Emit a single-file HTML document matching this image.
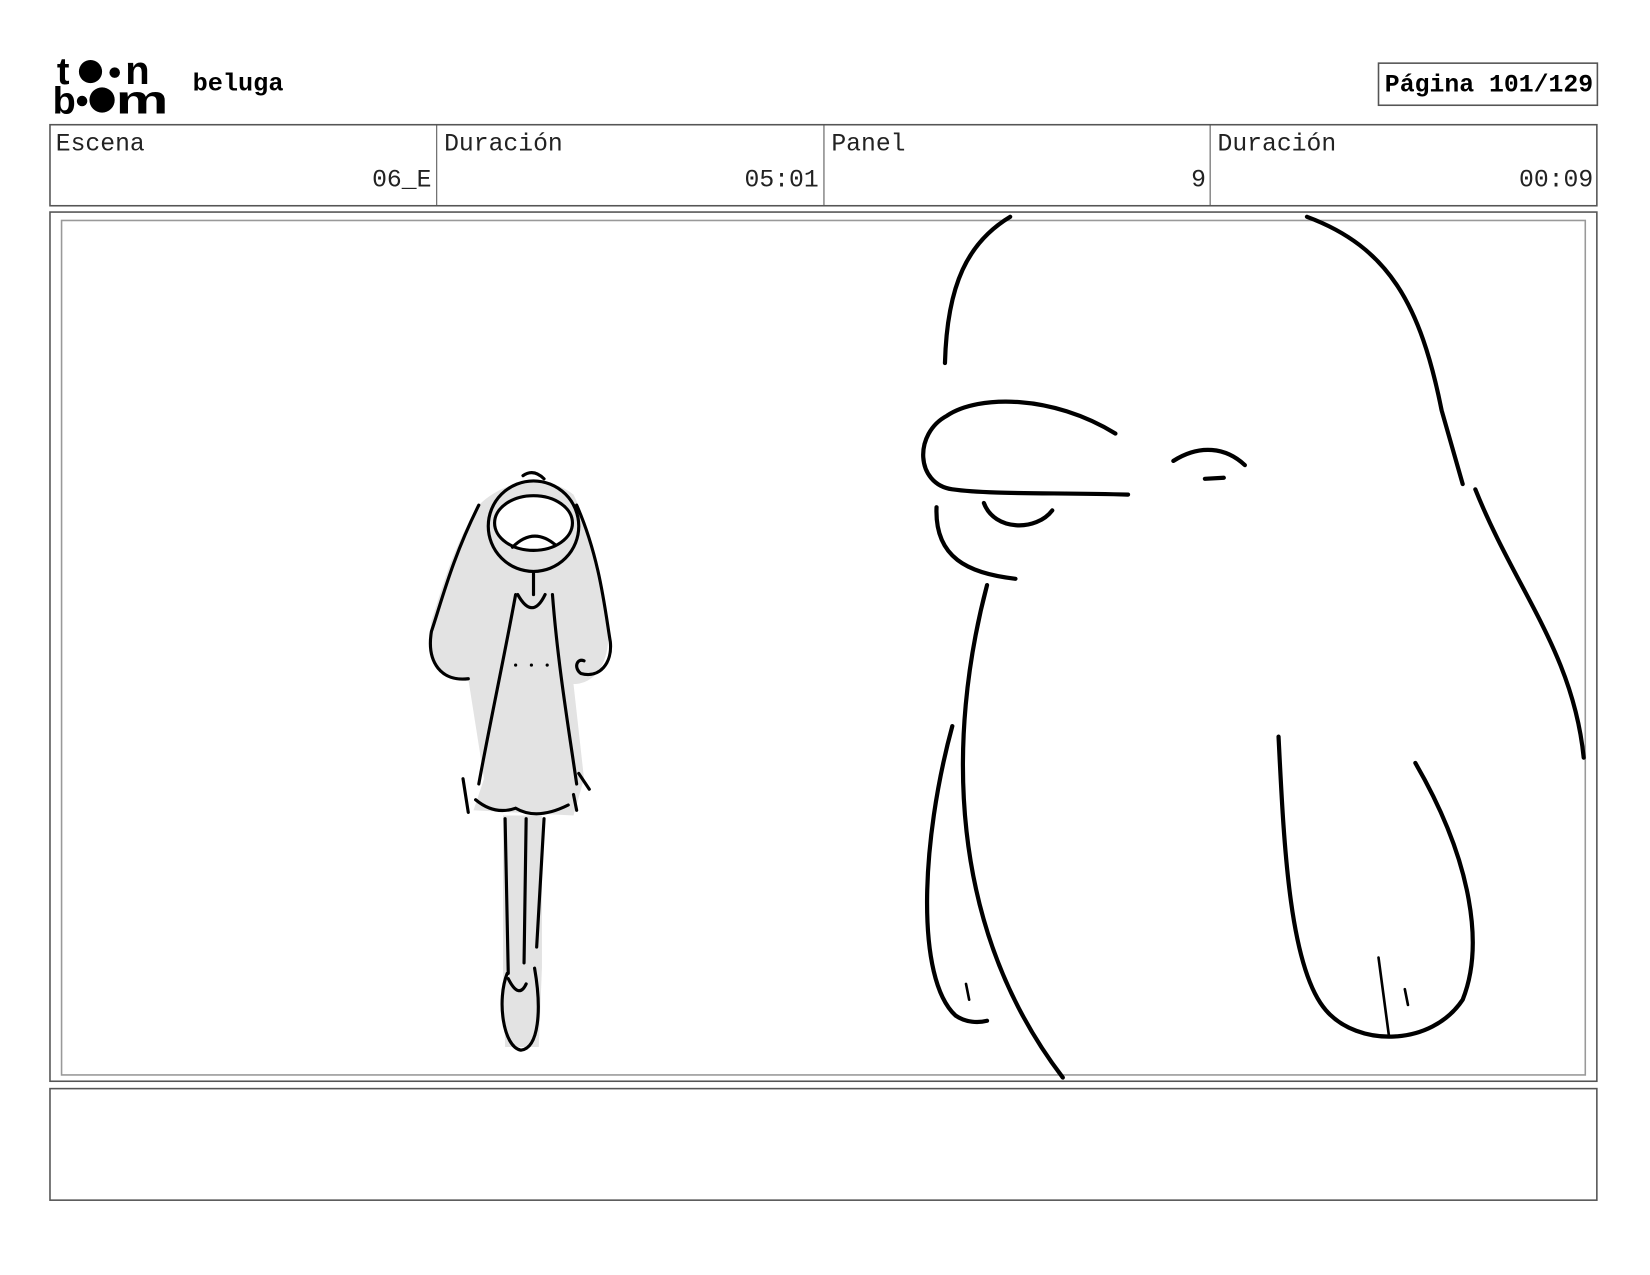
<!DOCTYPE html>
<html><head><meta charset="utf-8"><style>
html,body{margin:0;padding:0;background:#fff;}
body{width:1650px;height:1275px;overflow:hidden;}
svg{display:block;}
text{font-family:"Liberation Mono",monospace;}
</style></head><body>
<svg width="1650" height="1275" viewBox="0 0 1568 1211.6" xmlns="http://www.w3.org/2000/svg">
<!-- logo -->
<g fill="#000" style="font-family:'Liberation Sans',sans-serif" font-weight="bold">
<text x="54" y="80" font-size="36" style="font-family:'Liberation Sans',sans-serif">t</text>
<circle cx="86" cy="68" r="11"/><circle cx="109" cy="69" r="5"/>
<text x="119" y="80" font-size="38" style="font-family:'Liberation Sans',sans-serif">n</text>
<text x="50" y="108" font-size="36" style="font-family:'Liberation Sans',sans-serif">b</text>
<circle cx="78" cy="96" r="5"/><circle cx="97" cy="95" r="12"/>
<text x="110" y="108" font-size="38" style="font-family:'Liberation Sans',sans-serif" textLength="50" lengthAdjust="spacingAndGlyphs">m</text>
</g>
<text x="183" y="86" font-size="24" font-weight="bold">beluga</text>
<rect x="1310" y="60" width="208" height="40" fill="none" stroke="#555" stroke-width="1.5"/>
<text x="1316" y="87" font-size="23.5" font-weight="bold" textLength="198" lengthAdjust="spacingAndGlyphs">Página 101/129</text>
<!-- table -->
<rect x="47.5" y="118.5" width="1470" height="77" fill="none" stroke="#555" stroke-width="1.5"/>
<line x1="415" y1="118" x2="415" y2="196" stroke="#555" stroke-width="1"/>
<line x1="783" y1="118" x2="783" y2="196" stroke="#555" stroke-width="1"/>
<line x1="1150" y1="118" x2="1150" y2="196" stroke="#555" stroke-width="1"/>
<g font-size="23.5" fill="#222">
<text x="53" y="143">Escena</text><text x="410" y="177" text-anchor="end">06_E</text>
<text x="422" y="143">Duración</text><text x="778" y="177" text-anchor="end">05:01</text>
<text x="790" y="143">Panel</text><text x="1146" y="177" text-anchor="end">9</text>
<text x="1157" y="143">Duración</text><text x="1514" y="177" text-anchor="end">00:09</text>
</g>
<rect x="47.5" y="201.5" width="1470" height="826" fill="none" stroke="#555" stroke-width="1.5"/>
<rect x="58.5" y="209.5" width="1448" height="812" fill="none" stroke="#999" stroke-width="1.5"/>
<rect x="47.5" y="1034.5" width="1470" height="106" fill="none" stroke="#555" stroke-width="1.5"/>
<!-- girl -->
<path d="M455 480 C430 520 420 560 410 590 C405 630 420 650 445 645 L460 740 L450 770 L545 775 L555 740 L545 650 C570 650 585 620 575 580 C565 540 560 500 545 470 C520 450 480 455 455 480 Z" fill="#e3e3e3"/>
<path d="M478 775 L515 775 L515 920 L512 995 L480 995 L478 920 Z" fill="#e3e3e3"/>
<g fill="none" stroke="#000" stroke-width="3" stroke-linecap="round">
<ellipse cx="507" cy="500" rx="43" ry="43"/>
<ellipse cx="507" cy="497" rx="37" ry="26" fill="#fff"/>
<path d="M487 520 Q507 500 528 518"/>
<path d="M497 452 Q507 445 517 455"/>
<path d="M455 480 C430 530 420 570 410 600 C405 630 420 648 445 645"/>
<path d="M548 480 C570 530 575 580 580 610 C582 630 570 645 552 640 C545 635 548 625 555 628"/>
<path d="M490 565 C480 620 465 690 455 745"/>
<path d="M525 565 C530 630 540 690 548 745"/>
<path d="M492 565 Q506 590 518 565"/>
<path d="M507 545 L507 565"/>
<path d="M452 760 Q470 775 490 768 Q510 780 540 765"/>
<path d="M440 740 L445 772 M550 735 L560 750 M545 755 L548 770"/>
<path d="M480 778 L483 925 M500 778 L498 915 M517 778 L510 900"/>
<path d="M482 925 C472 950 478 995 495 998 C512 996 515 960 508 920"/>
<path d="M483 930 Q493 950 500 935"/>
</g>
<g fill="#000"><circle cx="490" cy="632" r="1.5"/><circle cx="505" cy="632" r="1.5"/><circle cx="520" cy="632" r="1.5"/></g>
<!-- beluga -->
<g fill="none" stroke="#000" stroke-width="4" stroke-linecap="round">
<path d="M960 206 C920 230 900 270 898 345"/>
<path d="M1242 206 C1320 235 1350 290 1370 390 L1390 460"/>
<path d="M1402 465 C1440 560 1495 620 1505 720"/>
<path d="M1060 412 C1000 375 930 375 900 395 C868 412 870 460 905 465 C940 470 1000 468 1072 470"/>
<path d="M890 482 C888 530 920 545 965 550"/>
<path d="M935 478 C945 505 985 505 1000 485"/>
<path d="M1115 438 C1140 422 1165 425 1183 442"/>
<path d="M1145 455 L1163 454"/>
<path d="M938 556 C900 700 900 880 1010 1024"/>
<path d="M905 690 C875 800 870 930 908 965 C918 972 930 972 938 970"/>
<path d="M1215 700 C1220 800 1225 920 1260 960 C1290 995 1360 995 1390 950 C1410 900 1400 820 1345 725"/>
<path d="M1310 910 L1320 985 M1335 940 L1338 955 M918 935 L921 950" stroke-width="2.5"/>
</g>
</svg>
</body></html>
